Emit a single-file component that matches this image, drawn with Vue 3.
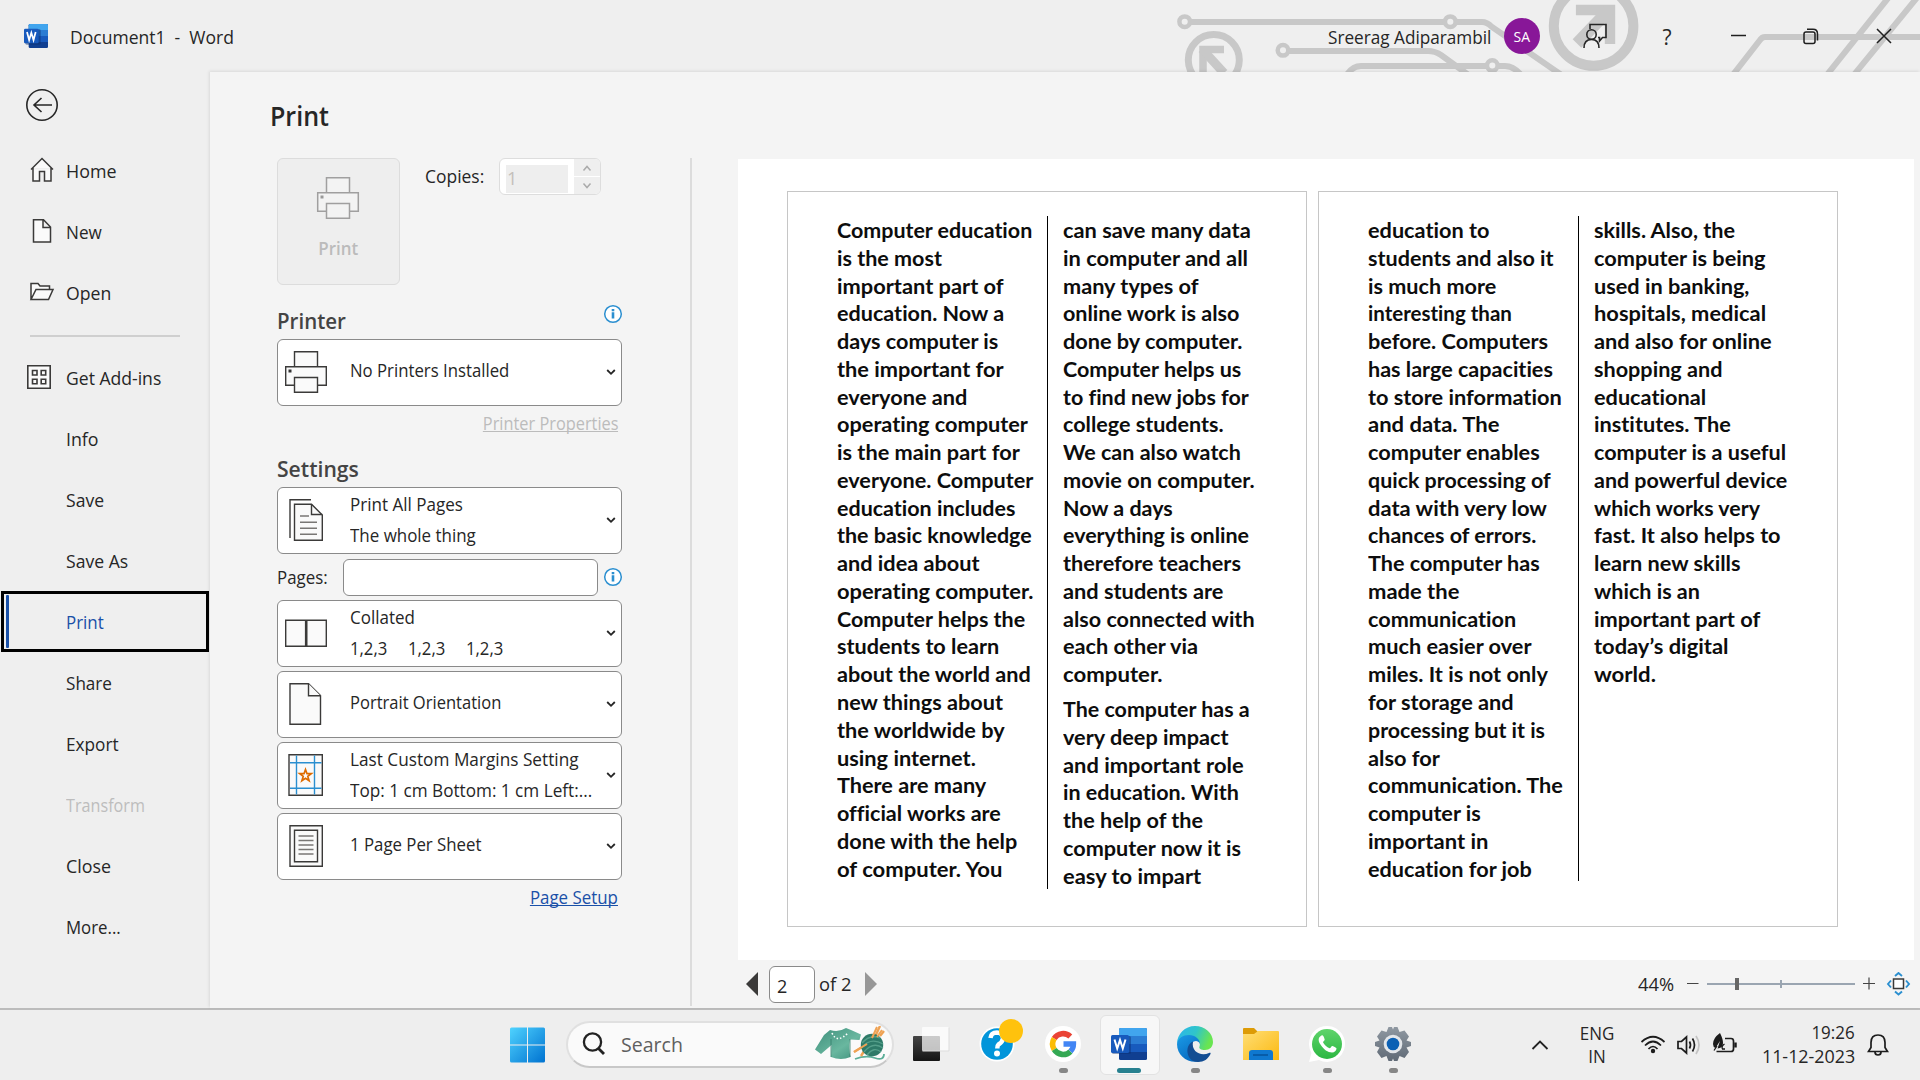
<script setup>
const fit = (el, { value }) => {
  if (!value) return
  el.style.transform = 'none'
  const natural = el.offsetWidth
  el.style.transform = `scaleX(${(value + 1.6) / natural})`
}
const vFit = { mounted: fit }

const navTop = [
  { label: 'Home', w: 49, icon: 'home' },
  { label: 'New', w: 34.5, icon: 'new' },
  { label: 'Open', w: 43.5, icon: 'open' },
]
const navRest = [
  { label: 'Get Add-ins', w: 94, icon: 'addins' },
  { label: 'Info', w: 31 },
  { label: 'Save', w: 36.5 },
  { label: 'Save As', w: 61 },
  { label: 'Print', w: 36, active: true },
  { label: 'Share', w: 44 },
  { label: 'Export', w: 51 },
  { label: 'Transform', w: 77.5, disabled: true },
  { label: 'Close', w: 43 },
  { label: 'More...', w: 53.5 },
]

const settings = [
  { icon: 'collated', copies: true, lines: [['Collated', 63.5]] },
  { icon: 'portrait', lines: [['Portrait Orientation', 150]] },
  { icon: 'margins', lines: [['Last Custom Margins Setting', 227], ['Top: 1 cm Bottom: 1 cm Left:...', 240.5]] },
  { icon: 'sheet', lines: [['1 Page Per Sheet', 130]] },
]

const pages = [
  {
    rule: 673,
    columns: [
      [[
        ['Computer education', 194], ['is the most', 103.4], ['important part of', 165.4], ['education. Now a', 165.7],
        ['days computer is', 159.6], ['the important for', 164.9], ['everyone and', 128.6], ['operating computer', 189],
        ['is the main part for', 180.7], ['everyone. Computer', 194.8], ['education includes', 176.4], ['the basic knowledge', 193],
        ['and idea about', 141.3], ['operating computer.', 194.4], ['Computer helps the', 187], ['students to learn', 160.8],
        ['about the world and', 192.5], ['new things about', 164.2], ['the worldwide by', 166.5], ['using internet.', 137.4],
        ['There are many', 147.4], ['official works are', 162.3], ['done with the help', 179], ['of computer. You', 163.8],
      ]],
      [[
        ['can save many data', 185.6], ['in computer and all', 182.9], ['many types of', 133.9], ['online work is also', 174.9],
        ['done by computer.', 178.3], ['Computer helps us', 176.7], ['to find new jobs for', 184.7], ['college students.', 159.2],
        ['We can also watch', 175.7], ['movie on computer.', 190.2], ['Now a days', 108.3], ['everything is online', 184.7],
        ['therefore teachers', 176], ['and students are', 158.7], ['also connected with', 189.7], ['each other via', 133.9],
        ['computer.', 97.9],
      ], [
        ['The computer has a', 185.6], ['very deep impact', 163.4], ['and important role', 178.7], ['in education. With', 174.5],
        ['the help of the', 138.5], ['computer now it is', 176.7], ['easy to impart', 136.2],
      ]],
    ],
  },
  {
    rule: 665,
    columns: [
      [[
        ['education to', 120], ['students and also it', 184.5], ['is much more', 127], ['interesting than', 142.5],
        ['before. Computers', 178.5], ['has large capacities', 183.5], ['to store information', 192.5], ['and data. The', 129.5],
        ['computer enables', 170], ['quick processing of', 181], ['data with very low', 177], ['chances of errors.', 167],
        ['The computer has', 170], ['made the', 89.5], ['communication', 146], ['much easier over', 161.5],
        ['miles. It is not only', 178.5], ['for storage and', 143.5], ['processing but it is', 175.5], ['also for', 70.5],
        ['communication. The', 193], ['computer is', 111.5], ['important in', 118.5], ['education for job', 162],
      ]],
      [[
        ['skills. Also, the', 140], ['computer is being', 170], ['used in banking,', 154], ['hospitals, medical', 170],
        ['and also for online', 176], ['shopping and', 127], ['educational', 110.5], ['institutes. The', 135],
        ['computer is a useful', 191], ['and powerful device', 192], ['which works very', 164], ['fast. It also helps to', 184.5],
        ['learn new skills', 144.5], ['which is an', 104.5], ['important part of', 165], ['today’s digital', 133], ['world.', 60],
      ]],
    ],
  },
]
const title = 'Document1  -  Word'
</script>

<template>
  <div class="screen">
    <header class="titlebar">
      <svg class="circuit" width="760" height="72" viewBox="1160 0 760 72" fill="none" stroke="#c8c8c8" stroke-width="6">
        <circle cx="1184.7" cy="21.7" r="5.3" stroke-width="4.5" />
        <path d="M1190 22H1444M1456 22H1482Q1487 22 1492 27L1563 76" />
        <circle cx="1450.3" cy="21.7" r="5.3" stroke-width="4.5" />
        <circle cx="1213.8" cy="60" r="25.5" stroke-width="7" />
        <path d="M1203 72V49.5H1224" stroke-width="7.5" />
        <path d="M1202 49L1224 73" stroke-width="9" />
        <circle cx="1283" cy="50.3" r="5.3" stroke-width="4.5" />
        <path d="M1289 51H1428Q1435 51 1441 55L1470 76" />
        <path d="M1346 76Q1352 66 1361 66H1486M1498 66H1505Q1514 66 1522 76" />
        <circle cx="1492.3" cy="65.5" r="5.3" stroke-width="4.5" />
        <circle cx="1593.6" cy="26" r="39.8" stroke-width="10" />
        <path d="M1575.9 10H1610V44" stroke-width="10.4" />
        <path d="M1577 43.500L1609 10" stroke-width="12" />
        <path d="M1732 76L1760 40Q1762 37 1765 37H1920M1826 76L1889 -3M1853 76L1920 -6" />
      </svg>
      <svg class="word-logo" width="24" height="24" viewBox="0 0 36 36" preserveAspectRatio="none">
        <rect x="7" y="0" width="29" height="36" rx="2" fill="#103f91" />
        <path d="M7 2q0-2 2-2h25q2 0 2 2v7H7z" fill="#41a5ee" /><path d="M7 9h29v9H7z" fill="#2b7cd3" /><path d="M7 18h29v9H7z" fill="#185abd" />
        <rect x="2" y="8" width="23" height="23" rx="2" fill="#0b2f70" opacity=".5" />
        <rect x="0" y="7" width="22" height="22" rx="2" fill="#185abd" />
        <path d="M4.500 12l3.200 12L11 13l3.300 11 3.200-12" fill="none" stroke="#fff" stroke-width="2.600" />
      </svg>
      <div class="doc-title"><span v-fit="162" class="t pre">{{ title }}</span></div>
      <div class="account">
        <div class="user"><span v-fit="161.500" class="t">Sreerag Adiparambil</span></div>
        <div class="avatar"><span>SA</span></div>
        <svg class="win" width="26" height="26" viewBox="0 0 26 26" fill="none" stroke="#262626" stroke-width="1.600">
          <path d="M8 6V1.500H24V14.500H20.500L17.500 18V14.500H16" /><circle cx="9.500" cy="11.500" r="4.700" /><path d="M2 25q0-8.500 7.500-8.500T17 25" />
        </svg>
        <span class="help">?</span>
        <svg class="win" width="16" height="16" viewBox="0 0 16 16" stroke="#1f1f1f" stroke-width="1.500"><path d="M0 7.500H15" /></svg>
        <svg class="win restore" width="16" height="17" viewBox="0 0 16 17" fill="none" stroke="#1f1f1f" stroke-width="1.500">
          <rect x="1" y="4" width="11" height="11.500" rx="2" /><path d="M4 1.300H10Q14.500 1.300 14.500 6V12.500" />
        </svg>
        <svg class="win close" width="16" height="16" viewBox="0 0 16 16" stroke="#1f1f1f" stroke-width="1.500"><path d="M1 1L15 15M15 1L1 15" /></svg>
      </div>
    </header>

    <div class="body">
      <nav class="sidebar">
        <svg class="back" width="34" height="34" viewBox="0 0 34 34" fill="none" stroke="#262626" stroke-width="1.600">
          <circle cx="17" cy="17" r="15.200" /><path d="M27 17H9M16.500 10L9 17l7.500 7" />
        </svg>
        <div v-for="n in navTop" :key="n.label" class="nav">
          <span class="nav-icon">
            <svg width="26" height="26" viewBox="0 0 26 26" fill="#fafafa" stroke="#3b3a39" stroke-width="1.500">
              <path v-if="n.icon === 'home'" d="M2 12.500L13 1.500l11 11M4 11V24H10.500V14.500H15.500V24H22V11" />
              <path v-else-if="n.icon === 'new'" d="M4.500 1.800H14.500L21.500 9V24H4.500zM14 2V9.500H21.500" />
              <path v-else d="M5 20.500H2V4.500H9L11 7H20.500V10.500M2 20.500L7 10.500H24L19.500 20.500z" />
            </svg>
          </span>
          <span v-fit="n.w" class="t">{{ n.label }}</span>
        </div>
        <div class="nav-rule"></div>
        <div v-for="n in navRest" :key="n.label" class="nav" :class="{ active: n.active, disabled: n.disabled }">
          <span class="nav-icon shift">
            <svg v-if="n.icon" width="26" height="26" viewBox="0 0 26 26" fill="#fafafa" stroke="#3b3a39" stroke-width="1.600">
              <path d="M1.800 1.800H24.200V24.200H1.800zM6.500 6.500h4.500V11H6.500zM15.200 6.500h4.500V11h-4.500zM6.500 15.300h4.500v4.500H6.500zM15.200 15.300h4.500v4.500h-4.500z" />
            </svg>
          </span>
          <span v-fit="n.w" class="t">{{ n.label }}</span>
        </div>
      </nav>

      <main class="main">
        <section class="options">
          <h1><span v-fit="57.500" class="t">Print</span></h1>
          <div class="print-row">
            <div class="print-btn">
              <svg width="44" height="44" viewBox="0 0 44 44" fill="#f3f3f3" stroke="#a09f9f" stroke-width="1.500">
                <path d="M10.500 17V1.700H33.500V17M1.700 16.700H42.300V35.300H1.700z" /><path d="M10.500 27.500H33.500V42.300H10.500z" /><path d="M4.500 19.500h3v3h-3z" fill="#999" stroke="none" />
              </svg>
              <span>Print</span>
            </div>
            <div class="copies-label"><span v-fit="57.500" class="t">Copies:</span></div>
            <div class="spinner">
              <div class="spin-val">1</div>
              <div class="spin-btns">
                <svg width="26" height="17" viewBox="0 0 26 17" fill="none" stroke="#ababab" stroke-width="1.500"><path d="M9.500 11.500L13 7.500l3.500 4" /></svg>
                <svg width="26" height="17" viewBox="0 0 26 17" fill="none" stroke="#ababab" stroke-width="1.500"><path d="M9.500 6.500L13 10.500l3.500-4" /></svg>
              </div>
            </div>
          </div>

          <div class="heading printer-head">
            <span v-fit="67" class="t">Printer</span>
            <svg class="info" width="20" height="20" viewBox="0 0 20 20"><circle cx="10" cy="10" r="8.300" fill="#fff" stroke="#2b8fd0" stroke-width="1.500" /><path d="M10 8.300V14.500M10 5v2.200" stroke="#2b8fd0" stroke-width="2.600" /></svg>
          </div>
          <div class="combo">
            <svg class="combo-icon" width="44" height="44" viewBox="0 0 44 44" fill="#fafafa" stroke="#3b3a39" stroke-width="1.400">
              <path d="M10.500 17V1.700H33.500V17M1.700 16.700H42.300V35.300H1.700z" /><path d="M10.500 27.500H33.500V42.300H10.500z" /><path d="M4.500 19.500h3v3h-3z" fill="#333" stroke="none" />
            </svg>
            <div class="combo-text raise"><span v-fit="157.500" class="t">No Printers Installed</span></div>
            <svg class="chev" width="10" height="8" viewBox="0 0 10 8" fill="none" stroke="#262626" stroke-width="1.800"><path d="M1.200 2L5 5.800 8.800 2" /></svg>
          </div>
          <div class="link off"><span v-fit="133.600" class="t right">Printer Properties</span></div>

          <div class="heading settings-head"><span v-fit="80" class="t">Settings</span></div>
          <div class="combo">
            <svg class="combo-icon" width="44" height="44" viewBox="0 0 44 44" fill="none" stroke="#3b3a39" stroke-width="1.400">
              <path d="M6 40V1.700H27" /><path d="M10.500 6.200H27.500L38.300 17V42.300H10.500z" fill="#fafafa" /><path d="M27.500 6.200V16.500H38.300" />
              <path d="M16 18H25M16 24.300H33M16 30.300H33M16 36.300H33" stroke="#797775" />
            </svg>
            <div class="combo-text"><span v-fit="111" class="t">Print All Pages</span><span v-fit="124.500" class="t">The whole thing</span></div>
            <svg class="chev" width="10" height="8" viewBox="0 0 10 8" fill="none" stroke="#262626" stroke-width="1.800"><path d="M1.200 2L5 5.800 8.800 2" /></svg>
          </div>
          <div class="pages-row">
            <div class="pages-label"><span v-fit="49" class="t">Pages:</span></div>
            <div class="pages-input"></div>
            <svg width="20" height="20" viewBox="0 0 20 20"><circle cx="10" cy="10" r="8.300" fill="#fff" stroke="#2b8fd0" stroke-width="1.500" /><path d="M10 8.300V14.500M10 5v2.200" stroke="#2b8fd0" stroke-width="2.600" /></svg>
          </div>
          <div v-for="s in settings" :key="s.icon" class="combo stacked">
            <svg class="combo-icon" width="44" height="44" viewBox="0 0 44 44" fill="#fafafa" stroke="#3b3a39" stroke-width="1.400">
              <template v-if="s.icon === 'collated'">
                <path d="M1.700 9.200H42.300V35.300H1.700z" /><path d="M22.200 9V35.500" stroke-width="2.600" />
              </template>
              <template v-else-if="s.icon === 'portrait'">
                <path d="M6 1.700H24.500L36.500 13.500V42.300H6z" /><path d="M24.500 1.700V13.700H36.500" />
              </template>
              <template v-else-if="s.icon === 'margins'">
                <path d="M5 1.700H38.300V42.300H5z" />
                <path d="M12.500 2.500V41.500M30.500 2.500V41.500M6 9.700H37.500M6 35.300H37.500" stroke="#2b8fd0" />
                <path d="M21.500 16.500l1.500 4.200h4.300l-3.500 2.700 1.300 4.300-3.600-2.500-3.600 2.500 1.300-4.300-3.500-2.700H20z" stroke="#de6c00" stroke-width="1.700" />
              </template>
              <template v-else>
                <path d="M6 1.700H38.300V42.300H6z" /><path d="M10.500 6.200H33.500V37.700H10.500z" />
                <path d="M14.500 12H29.500M14.500 16.500H29.500M14.500 21H29.500M14.500 25.500H29.500M14.500 30H29.500" stroke="#797775" />
              </template>
            </svg>
            <div class="combo-text" :class="{ raise: s.lines.length === 1 && !s.copies }">
              <span v-for="l in s.lines" :key="l[0]" v-fit="l[1]" class="t">{{ l[0] }}</span>
              <div v-if="s.copies" class="triples">
                <div v-for="i in 3" :key="i"><span v-fit="35.500" class="t">1,2,3</span></div>
              </div>
            </div>
            <svg class="chev" width="10" height="8" viewBox="0 0 10 8" fill="none" stroke="#262626" stroke-width="1.800"><path d="M1.200 2L5 5.800 8.800 2" /></svg>
          </div>
          <div class="link setup"><span v-fit="86.500" class="t right">Page Setup</span></div>
        </section>

        <section class="preview">
          <div class="canvas">
            <div v-for="(p, pi) in pages" :key="pi" class="page">
              <div v-for="(c, ci) in p.columns" :key="ci" class="column">
                <div v-for="(para, qi) in c" :key="qi" class="para">
                  <div v-for="(l, li) in para" :key="li" class="line"><span v-fit="l[1]" class="t">{{ l[0] }}</span></div>
                </div>
              </div>
              <div class="col-rule" :style="{ height: p.rule + 'px' }"></div>
            </div>
          </div>
          <footer class="status">
            <svg width="12" height="24" viewBox="0 0 12 24"><path d="M12 0V24L0 12z" fill="#3b3a39" /></svg>
            <div class="page-no">2</div>
            <div class="of"><span v-fit="31" class="t">of 2</span></div>
            <svg width="12" height="24" viewBox="0 0 12 24"><path d="M0 0V24L12 12z" fill="#979797" /></svg>
            <div class="zoom-label"><span v-fit="34" class="t">44%</span></div>
            <svg class="zoom" width="226" height="24" viewBox="1686 972 226 24" fill="none">
              <path d="M1687 983.500h11.500M1863 983.500h12M1869 977.500v12" stroke="#444" stroke-width="1.200" />
              <path d="M1707 984h148" stroke="#9aa5b1" stroke-width="2" /><path d="M1781 980v8" stroke="#9aa5b1" stroke-width="2" />
              <path d="M1735 978h4v12h-4z" fill="#666" />
              <path d="M1893.500 979h10v9.500h-10z" fill="#fff" stroke="#3b3a39" stroke-width="1.500" />
              <path d="M1895 976l3.500-3 3.500 3M1895 991.500l3.500 3 3.500-3M1891 980.500l-3 3.500 3 3.500M1906 980.500l3 3.500-3 3.500" stroke="#2b8fd0" stroke-width="1.900" />
            </svg>
          </footer>
        </section>
      </main>
    </div>

    <footer class="taskbar">
      <svg class="start" width="36" height="36" viewBox="0 0 36 36">
        <defs>
          <linearGradient id="win" x1="0" y1="0" x2="1" y2="1"><stop offset="0" stop-color="#4fd3ff" /><stop offset="1" stop-color="#0072d0" /></linearGradient>
          <linearGradient id="dark" x1="0" y1="0" x2="0" y2="1"><stop offset="0" stop-color="#444" /><stop offset="1" stop-color="#151515" /></linearGradient>
          <linearGradient id="folder" x1="0" y1="0" x2="1" y2="1"><stop offset="0" stop-color="#ffde75" /><stop offset="1" stop-color="#fbb911" /></linearGradient>
          <linearGradient id="gear" x1="0" y1="0" x2="0" y2="1"><stop offset="0" stop-color="#8f98a1" /><stop offset="1" stop-color="#606a76" /></linearGradient>
          <linearGradient id="edgeTop" x1="0" y1="0" x2="1" y2=".3"><stop offset="0" stop-color="#2bb4ef" /><stop offset=".55" stop-color="#30c5c9" /><stop offset="1" stop-color="#69e551" /></linearGradient>
          <linearGradient id="edgeLeft" x1="0" y1="0" x2=".6" y2="1"><stop offset="0" stop-color="#1b9be6" /><stop offset="1" stop-color="#0669c0" /></linearGradient>
          <linearGradient id="wa" x1="0" y1="0" x2="0" y2="1"><stop offset="0" stop-color="#5fd46b" /><stop offset="1" stop-color="#2cb742" /></linearGradient>
          <linearGradient id="knit" x1="0" y1="0" x2="1" y2="1"><stop offset="0" stop-color="#3e8e7b" /><stop offset=".6" stop-color="#69b79f" /><stop offset="1" stop-color="#3d8f7a" /></linearGradient>
        </defs>
        <path d="M0 2Q0 .500 1.500 .500H17V17.500H0zM18 .500H33.500Q35 .500 35 2V17.500H18zM0 18.500H17V35.500H1.500Q0 35.500 0 34zM18 18.500H35V34Q35 35.500 33.500 35.500H18z" fill="url(#win)" />
      </svg>
      <div class="search">
        <svg width="24" height="24" viewBox="0 0 24 24" fill="none" stroke="#222" stroke-width="2.300"><circle cx="10.500" cy="10" r="8.600" /><path d="M16.500 16.500L22 22" stroke-width="2.900" /></svg>
        <div class="search-text"><span v-fit="60" class="t">Search</span></div>
        <svg class="yarn" width="72" height="36" viewBox="0 0 72 36">
          <path d="M16 4Q25 6.500 32 2L37 4 47 8.500 45.500 14 36 13.500Q34.500 22 36.500 31Q27 35 17 31L17.500 19 7 28 1 23.500 10 9z" fill="url(#knit)" />
          <path d="M18 7Q23 18 34 7" fill="none" stroke="#fff" stroke-width="1.600" stroke-dasharray="1.500 2" />
          <path d="M17 13V31M36 13V31" stroke="#347e6b" stroke-width=".8" />
          <path d="M41 33Q52 29 61 32T70 28" fill="none" stroke="#5bae98" stroke-width="1.800" />
          <path d="M60 13L66 0M66 10L70 5M40 26L53 18M47 30L52 22" stroke="#efa253" stroke-width="2.400" />
          <circle cx="58" cy="19" r="11.200" fill="#2e7a68" />
          <path d="M48 17Q56 8 66 12M48 21Q57 11 69 18M50 26Q59 15 69 22M53 29Q60 20 67 26" fill="none" stroke="#559f8a" stroke-width="1.300" />
          <path d="M40 26L53 18M58 12L63 1M63 11L68 4" stroke="#efa253" stroke-width="2" />
        </svg>
      </div>
      <div class="apps">
        <div class="app first">
          <svg width="38" height="38" viewBox="0 0 38 38"><rect x="1" y="11" width="27" height="25" rx="1" fill="url(#dark)" /><rect x="10" y="2" width="27" height="24" rx="1" fill="#fff" opacity=".72" /><path d="M10.500 26H37V2.500" fill="none" stroke="#ddd" /></svg>
        </div>
        <div class="app">
          <svg class="over" width="48" height="48" viewBox="0 0 48 48"><circle cx="21" cy="27" r="17.500" fill="#fff" /><circle cx="21" cy="27" r="15.800" fill="#0295da" />
            <path d="M14.500 21Q15 15.500 21 15.500Q27 16 27 21.500Q26.500 25 22.500 27.500Q21.300 28.500 21.300 31.500" fill="none" stroke="#fff" stroke-width="4.500" /><circle cx="21" cy="36.500" r="3" fill="#fff" />
            <circle cx="35" cy="14" r="12" fill="#ffc20d" /></svg>
        </div>
        <div class="app">
          <svg width="38" height="38" viewBox="0 0 38 38" fill="none" stroke-width="5.600"><circle cx="19" cy="19" r="18" fill="#fff" />
            <path d="M10.200 13.500A10.500 10.500 0 0 1 26.300 11.500" stroke="#ea4335" /><path d="M10.200 24.500A10.500 10.500 0 0 1 10.200 13.500" stroke="#fbbc05" />
            <path d="M26.500 26.400A10.500 10.500 0 0 1 10.200 24.500" stroke="#34a853" /><path d="M19.500 19H29.500A10.500 10.500 0 0 1 26.500 26.400" stroke="#4285f4" stroke-width="5.300" /></svg>
          <i class="dot"></i>
        </div>
        <div class="app current">
          <svg width="36" height="34" viewBox="0 0 36 34">
            <rect x="8" y="1" width="28" height="32" rx="1.500" fill="#103f91" /><path d="M8 2.500Q8 1 9.500 1H34.500Q36 1 36 2.500V9H8z" fill="#41a5ee" /><path d="M8 9h28v8H8z" fill="#2b7cd3" /><path d="M8 17h28v8H8z" fill="#185abd" />
            <rect x="1" y="9" width="19" height="18" rx="1.500" fill="#0b2f70" opacity=".45" /><rect x="0" y="8" width="18" height="18" rx="1.500" fill="#185abd" />
            <path d="M3.500 12.500L6.200 21.500 9 13l2.800 8.500 2.700-9" fill="none" stroke="#fff" stroke-width="2" />
          </svg>
          <i class="dot wide"></i>
        </div>
        <div class="app">
          <svg width="38" height="38" viewBox="0 0 38 38">
            <path d="M1 19C1 9 9 1 19 1C29 1 37 8 37 17C37 22 33.500 25 29 25C25 25 22.500 23.500 23.500 21.500C25.500 17 20 12 13 12C7 12 3 15 1 19z" fill="url(#edgeTop)" />
            <path d="M1 19C2 13 7 10 13 10C19 10 24 14 24 19C21 13 14 17 14 24C14 31 19 35 26 35.500C14 40 1 32 1 19z" fill="url(#edgeLeft)" />
            <path d="M17 16.500C8 20 10 37 22 37C28 37 32 34 34.500 29C35 27.500 34 27.500 33 28C25 31.500 15 27 17 16.500z" fill="#124d93" />
          </svg>
          <i class="dot"></i>
        </div>
        <div class="app">
          <svg width="38" height="38" viewBox="0 0 38 38">
            <path d="M1 4Q1 3 2 3H12L16 7V12H1z" fill="#dd9b06" /><path d="M1 9H12L16 6H36Q37 6 37 7V35H1z" fill="url(#folder)" />
            <path d="M7 35V28Q7 25 10 25H28Q31 25 31 28V35z" fill="#0f78d0" /><path d="M11 30H26" stroke="#06539d" stroke-width="1.500" />
          </svg>
        </div>
        <div class="app">
          <svg width="38" height="38" viewBox="0 0 38 38"><path d="M1 37L3.500 28A18 18 0 1 1 11 35z" fill="#fff" /><circle cx="19" cy="19" r="15" fill="url(#wa)" />
            <path d="M13.500 10.500C10.500 12 9.500 15 12.500 19.500C15.500 24.500 20 27.500 24 27.500C26.500 27.500 28.500 25.500 28.500 23.500Q28.500 22.800 24.500 21C23.500 20.600 22.500 23.500 21.500 23.300C19 22.500 16 19.500 15 17.300C14.800 16.500 17 15.300 16.700 14.500C15.500 10.800 15 10 13.500 10.500z" fill="#fff" /></svg>
          <i class="dot"></i>
        </div>
        <div class="app">
          <svg width="38" height="38" viewBox="0 0 38 38">
            <path d="M14.500 2H18L19 4.500 20 2H23.500L25.500 7 30.500 5.500 35 11.500 32.500 15.500 37 17V21L32.500 22.500 35 27 30.500 33 25.500 31 23.500 36H20L19 33.500 18 36H14.500L12.500 31 7.500 33 3 27 5.500 22.500 1 21V17L5.500 15.500 3 11.500 7.500 5.500 12.500 7z" fill="url(#gear)" />
            <circle cx="19" cy="19" r="9.300" fill="#e3e6ea" /><circle cx="19" cy="19" r="6.300" fill="#0b60b4" />
          </svg>
          <i class="dot"></i>
        </div>
      </div>
      <div class="tray">
        <svg class="tray-chev" width="18" height="12" viewBox="0 0 18 12" fill="none" stroke="#222" stroke-width="1.800"><path d="M1.500 10L9 2.500l7.500 7.500" /></svg>
        <div class="lang"><span>ENG</span><span>IN</span></div>
        <svg class="sys" width="100" height="24" viewBox="1640 1032 100 24" fill="none" stroke="#1c1c1c" stroke-width="1.700">
          <path d="M1641.500 1041Q1653 1030.500 1664.500 1041M1645 1044.500Q1653 1036.500 1661 1044.500M1648.500 1048Q1653 1043 1657.500 1048" /><circle cx="1653" cy="1050" r="2.200" fill="#1c1c1c" stroke="none" />
          <path d="M1678 1040.500h3.500l5-4.500v16l-5-4.500h-3.500zM1689.500 1040.500q2 3.500 0 7M1692.500 1037.500q4 6.500 0 13" /><path d="M1696 1035q6 9 0 18" stroke="#c3c3c3" />
          <path d="M1725 1037.500h6q2.500 0 2.500 2.500v8q0 2.500-2.500 2.500h-14.500" /><path d="M1735.500 1041.500v5" stroke-width="2.500" />
          <path d="M1720 1032Q1713 1037 1713 1043Q1713 1046 1715.500 1047L1720 1040L1717.500 1047.500Q1723 1047 1723 1042Q1723 1038 1720 1032z" fill="#1c1c1c" stroke="none" /><path d="M1714 1049.500L1717 1045M1724.500 1043Q1721 1045 1722.500 1048H1725" stroke-width="1.300" />
        </svg>
        <div class="clock"><span v-fit="42" class="t right">19:26</span><span v-fit="91.500" class="t right">11-12-2023</span></div>
        <svg class="bell" width="22" height="24" viewBox="0 0 22 24" fill="none" stroke="#1c1c1c" stroke-width="1.700"><path d="M4 9.500Q4 2 11 2T18 9.500V14.500L20.500 18.500H1.500L4 14.500z" /><path d="M8 19Q8 22 11 22T14 19" /></svg>
      </div>
    </footer>
  </div>
</template>

<style>
body { margin: 0; overflow: hidden; }
</style>

<style scoped>
* { box-sizing: border-box; }
.screen { width: 1920px; height: 1080px; display: flex; flex-direction: column; overflow: hidden; background: #efefef; color: #262626; font: 18px/24px "Open Sans", "Noto Sans", sans-serif; }
svg { display: block; flex: none; }
.t { display: inline-block; white-space: nowrap; transform-origin: 0 50%; width: max-content; }
.t.right { transform-origin: 100% 50%; }
.t.pre { white-space: pre; }

.titlebar { position: relative; height: 72px; flex: none; display: flex; align-items: center; padding-left: 24px; }
.circuit { position: absolute; right: 0; top: 0; }
.doc-title { margin: 1px 0 0 22px; flex: 1; }
.account { position: relative; display: flex; align-items: center; height: 72px; }
.user { width: 176px; margin-top: 1px; }
.avatar { width: 36px; height: 36px; border-radius: 50%; background: #881798; color: #fff; font-size: 15px; display: flex; align-items: center; justify-content: center; }
.avatar span { transform: scaleX(.93); }
.win { margin-left: 42px; }
.win + .help { width: 14px; margin: 2px 0 0 52px; font-size: 21px; text-align: center; }
.help + .win { margin-left: 57px; }
.win.restore { margin-left: 56px; }
.win.close { margin: 0 28px 0 57px; }

.body { height: 936px; flex: none; display: flex; }
.sidebar { width: 210px; flex: none; }
.back { margin: 16px 0 19px 25px; }
.nav { height: 61px; display: flex; align-items: center; padding-bottom: 1px; }
.nav-icon { width: 26px; margin: 0 11px 0 29px; padding-bottom: 3px; }
.nav-icon.shift { margin: 0 14px 0 26px; }
.nav-rule { height: 2px; width: 150px; margin: 11px 0 11px 30px; background: #cfcfcf; }
.nav.disabled { color: #bdbdbd; }
.nav.active { position: relative; width: 208px; height: 61px; margin: -1px 0 1px 1px; border: 3px solid #000; padding: 0; color: #1a50a8; }
.nav.active .nav-icon { margin-left: 22px; }
.nav.active::before { content: ""; position: absolute; left: 2px; top: 1px; width: 3px; height: 53px; background: #1a50a8; border-radius: 1px; }

.main { flex: 1; display: flex; background: #f4f4f4; box-shadow: -1px -1px 3px rgba(0, 0, 0, .09); position: relative; }
.options { width: 482px; flex: none; padding: 26px 0 0 67px; position: relative; }
.options::after { content: ""; position: absolute; right: 0; top: 86px; width: 2px; height: 848px; background: #dcdcdc; }
h1 { margin: 0 0 0 -7px; font-size: 27.500px; font-weight: 600; line-height: 36px; height: 60px; }
.print-row { display: flex; height: 127px; }
.print-btn { width: 123px; height: 127px; border: 1px solid #dcdcdc; border-radius: 6px; background: #eee; display: flex; flex-direction: column; align-items: center; padding-top: 17px; font-weight: 600; color: #bbb; }
.print-btn svg { margin-left: -1px; }
.print-btn span { margin-top: 16px; transform: scaleX(.94); }
.copies-label { width: 99px; padding: 6px 0 0 25px; }
.spinner { width: 102px; height: 37px; border: 1px solid #ddd; border-radius: 6px; background: #fff; display: flex; justify-content: space-between; overflow: hidden; }
.spin-val { width: 62px; height: 28px; margin: 6px 0 0 6px; background: #eee; color: #c4bfbb; padding-left: 1px; line-height: 27px; }
.spin-btns { width: 26px; display: flex; flex-direction: column; gap: 1px; }
.spin-btns svg { background: #efefef; }

.heading { font-size: 21.500px; font-weight: 600; color: #444; display: flex; }
.printer-head { height: 54px; padding-top: 23px; line-height: 26px; justify-content: space-between; width: 346px; }
.info { margin-top: -4px; }
.settings-head { height: 41px; line-height: 26px; padding-top: 10px; }
.combo { width: 345px; height: 67px; border: 1px solid #8a8a8a; border-radius: 6px; background: #fff; display: flex; align-items: center; padding-left: 6px; }
.combo.stacked { margin-bottom: 4px; }
.combo-icon { margin-top: -1px; }
.combo-text { flex: 1; margin-left: 22px; padding-bottom: 1px; display: flex; flex-direction: column; gap: 7px; margin-top: -1px; }
.combo-text.raise { padding-bottom: 5px; }
.chev { margin: -1px 5px 0 0; }
.triples { display: flex; }
.triples > div { width: 58.200px; }
.link { width: 341px; height: 40px; padding-top: 5px; text-align: right; color: #1a50a8; }
.link .t { border-bottom: 1px solid currentColor; height: 21px; line-height: 24px; }
.link.off { color: #bcbcbc; }
.link.setup { padding-top: 1px; }
.pages-row { display: flex; align-items: center; height: 46px; }
.pages-label { width: 66px; }
.pages-input { width: 255px; height: 37px; background: #fff; border: 1px solid #8a8a8a; border-radius: 6px; margin-right: 5px; }

.preview { margin-left: 46px; width: 1176px; padding-top: 87px; }
.canvas { height: 801px; background: #fff; display: flex; gap: 11px; padding: 32px 0 0 49px; }
.page { position: relative; width: 520px; height: 736px; border: 1px solid #c6c6c6; display: flex; padding: 25px 0 0 48.500px; }
.column { width: 226px; }
.para { margin-bottom: 7.100px; }
.line { height: 27.770px; line-height: 27.770px; font-family: Lato, "Open Sans", sans-serif; font-weight: 700; font-size: 20.500px; color: #0d0d0d; font-variant-ligatures: none; }
.col-rule { position: absolute; left: 259px; top: 24px; width: 1px; background: #000; }
.status { display: flex; align-items: center; height: 48px; padding-left: 8px; }
.page-no { width: 46px; height: 37px; margin: 0 4px 0 11px; border: 1px solid #8a8a8a; border-radius: 6px; background: #fff; padding: 7px 0 0 7px; line-height: 25px; }
.of { width: 46px; }
.zoom-label { margin-left: 761px; width: 48px; }

.taskbar { height: 72px; flex: none; border-top: 2px solid #bcbcbc; background: #eee; display: flex; align-items: center; padding-left: 510px; }
.start { margin-top: -1px; }
.search { margin-left: 20px; width: 328px; height: 47px; border: 2px solid #e0e0e0; border-bottom-color: #c8c8c8; border-radius: 24px; background: #fafafa; display: flex; align-items: center; padding-left: 14px; margin-top: -2px; }
.search-text { margin: 1px 0 0 15px; font-size: 20px; color: #5f5f5f; flex: 1; }
.yarn { margin-right: 6px; }
.apps { display: flex; margin-left: 4px; }
.app { position: relative; width: 66px; height: 70px; display: flex; align-items: center; justify-content: center; padding-bottom: 2px; }
.over { margin-left: 6px; margin-top: -6px; }
.app.current::before { content: ""; position: absolute; left: 4px; top: 5px; width: 58px; height: 58px; border: 1px solid #e2e2e2; border-radius: 6px; background: #f7f7f7; }
.app.current svg { position: relative; }
.dot { position: absolute; left: 29px; top: 58px; width: 9px; height: 5px; border-radius: 3px; background: #868686; }
.dot.wide { left: 21px; width: 24px; background: #27808f; }
.tray { display: flex; align-items: center; margin-left: auto; padding-right: 31px; }
.tray-chev { margin: -1px 30px 0 0; }
.lang { width: 36px; text-align: center; display: flex; flex-direction: column; line-height: 23px; margin-right: 25px; font-size: 17.500px; }
.lang span { transform: scaleX(.97); }
.sys { margin-top: -1px; }
.clock { width: 115px; display: flex; flex-direction: column; align-items: flex-end; margin: -2px 12px 0 0; font-size: 17.500px; }
</style>
